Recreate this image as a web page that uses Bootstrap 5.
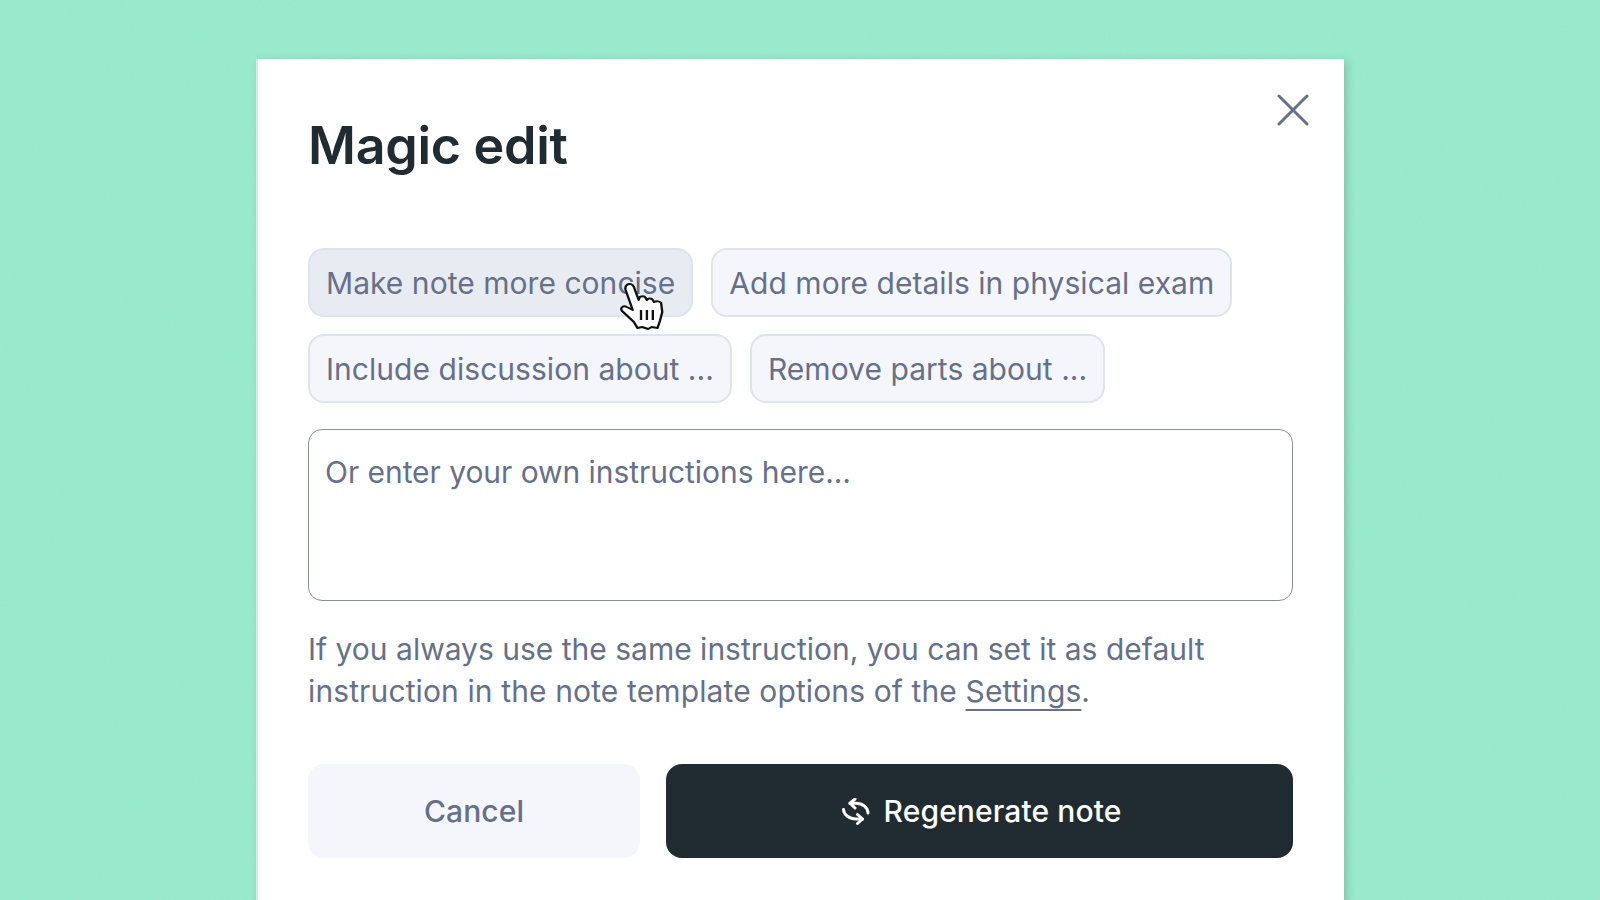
<!DOCTYPE html>
<html lang="en">
<head>
<meta charset="utf-8">
<title>Magic edit</title>
<link href="https://cdn.jsdelivr.net/npm/bootstrap@5.3.0/dist/css/bootstrap.min.css" rel="stylesheet">
<style>
html,body{height:100%;}
body{background:#98ebcc;font-family:"Inter","Liberation Sans",sans-serif;overflow:hidden;color:#667089;}
.stage{height:900px;overflow:hidden;position:relative;}
.noise-layer{position:absolute;inset:0;width:100%;height:100%;}
.magic-sheet{position:relative;width:1088px;margin:59px auto 0 256px;background:#fff;padding:55px 51px 0 52px;height:900px;border-left:2px solid #dfe3ec;box-shadow:3px 2px 8px rgba(60,120,110,.3);}
.close-x{position:absolute;top:35px;right:35px;line-height:0;background:none;border:0;padding:0;}
.magic-title{font-size:52px;font-weight:600;line-height:64px;color:#212b32;margin:0 0 70px -2px;letter-spacing:-.3px;}
.chip-row{gap:18px;margin-bottom:17px;margin-left:-2px;}
.chip-btn{font-size:30px;font-weight:400;letter-spacing:.04px;line-height:34px;height:69px;padding:0 16px;border:2px solid #dfe3ec;border-radius:16px;background:#f5f6fb;color:#667089;white-space:nowrap;}
.chip-hover{background:#e8ebf1;}
.note-input{display:block;height:172px;width:985px;margin:26px 0 0 -2px;border:1px solid #8b8f98;border-radius:14px;padding:21px 16px;font-size:30px;letter-spacing:-.05px;line-height:42px;color:#667089;background:#fff;resize:none;}
.note-input::placeholder{color:#667089;opacity:1;}
.help-copy{font-size:30px;line-height:42px;margin:27px 0 0 -2px;color:#667089;}
.help-line-two{letter-spacing:.12px;}
.help-copy a{color:#667089;text-decoration:underline;text-underline-offset:7px;text-decoration-thickness:1.5px;}
.action-row{gap:26px;margin:52px 0 0 -2px;width:985px;}
.cancel-btn,.regen-btn{height:94px;border-radius:16px;font-size:30px;font-weight:500;letter-spacing:.1px;border:0;}
.cancel-btn{width:332px;background:#f5f6fb;color:#667089;}
.regen-btn{flex:1;background:#212b32;color:#fff;gap:14px;padding-left:16px;}
.cursor-hand{position:absolute;left:357px;top:223px;line-height:0;}
</style>
</head>
<body>
<div class="stage">
<svg class="noise-layer" aria-hidden="true"><filter id="grain"><feTurbulence type="fractalNoise" baseFrequency=".55" numOctaves="3" seed="4"/><feColorMatrix values="0 0 0 0 .36 0 0 0 0 .74 0 0 0 0 .62 0 0 0 2 -.8"/></filter><rect width="100%" height="100%" filter="url(#grain)" opacity=".5"/></svg>
<div class="magic-sheet">
<button class="close-x" type="button" aria-label="Close"><svg width="32" height="32" viewBox="0 0 32 32"><path d="M2 2 30 30M30 2 2 30" stroke="#667089" stroke-width="3" stroke-linecap="round" fill="none"/></svg></button>
<h1 class="magic-title">Magic edit</h1>
<div class="d-flex chip-row">
<button class="btn chip-btn chip-hover" type="button">Make note more concise</button>
<button class="btn chip-btn" type="button">Add more details in physical exam</button>
</div>
<div class="d-flex chip-row">
<button class="btn chip-btn" type="button">Include discussion about ...</button>
<button class="btn chip-btn" type="button">Remove parts about ...</button>
</div>
<textarea class="form-control note-input" placeholder="Or enter your own instructions here..."></textarea>
<p class="help-copy">If you always use the same instruction, you can set it as default<br><span class="help-line-two">instruction in the note template options of the <a href="#">Settings</a>.</span></p>
<div class="d-flex action-row">
<button class="btn cancel-btn" type="button">Cancel</button>
<button class="btn regen-btn d-flex align-items-center justify-content-center" type="button"><svg width="28" height="27" viewBox="0 0 28 27" fill="none" stroke="#fff" stroke-width="3" stroke-linecap="round" stroke-linejoin="round"><path d="M8 5.2H14A12 9.8 0 0 1 26 15"/><path d="M13 1 8 5.2 13 10"/><path d="M20.5 21H14A12.5 10 0 0 1 1.5 11.5"/><path d="M15.5 16.5 20.5 21 15.5 25.5"/></svg><span>Regenerate note</span></button>
</div>
<div class="cursor-hand"><svg width="52" height="48" viewBox="0 0 44 48" preserveAspectRatio="none"><path d="M10 3c2-2 5-1 6 2l4 13 1-3c2-1 4-1 5 1l1 2c1-2 4-2 5 0l1 2c2-1 5-1 6 1l1 9-2 9-2 7-5-1-3 2-5-2-4 1-3-6-10-11c-2-3 1-6 4-4l5 3L9 8c-.5-2 0-4 1-5Z" fill="#fff" stroke="#111" stroke-width="2" stroke-linejoin="round"/><path d="M22 28v10M27 28v10M32 28v10" stroke="#111" stroke-width="2"/></svg></div>
</div>
</div>
</body>
</html>
